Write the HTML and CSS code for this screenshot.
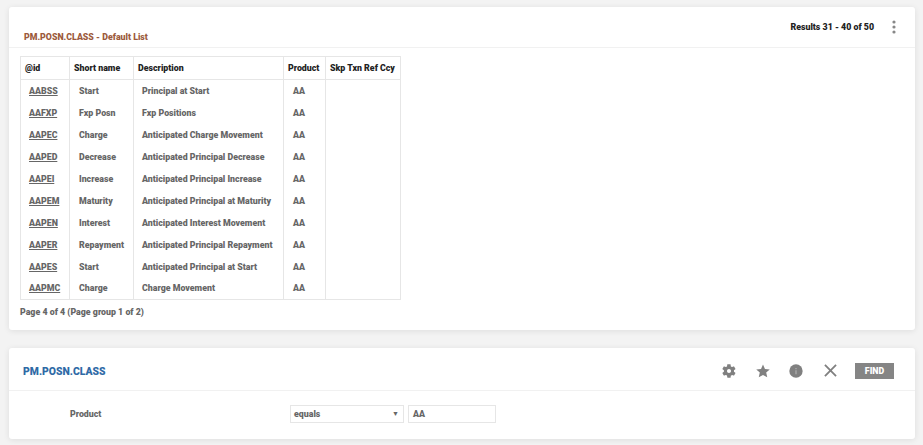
FILE: index.html
```html
<!DOCTYPE html>
<html lang="en">
<head>
<meta charset="utf-8">
<title>PM.POSN.CLASS</title>
<link rel="stylesheet" href="styles.css">
</head>
<body>
<section class="card list-card">
  <header class="list-head">
    <h2 class="list-title">PM.POSN.CLASS - Default List</h2>
    <div class="results">
      <span>Results 31 - 40 of 50</span>
      <svg class="kebab" width="4" height="14" viewBox="0 0 4 14"><circle cx="2" cy="2" r="1.6"/><circle cx="2" cy="7" r="1.6"/><circle cx="2" cy="12" r="1.6"/></svg>
    </div>
  </header>
  <div class="list-body">
    <table class="grid">
      <thead>
        <tr><th class="c1">@id</th><th class="c2">Short name</th><th class="c3">Description</th><th class="c4">Product</th><th class="c5">Skp Txn Ref Ccy</th></tr>
      </thead>
      <tbody>
        <tr><td><a href="#">AABSS</a></td><td>Start</td><td>Principal at Start</td><td>AA</td><td></td></tr>
        <tr><td><a href="#">AAFXP</a></td><td>Fxp Posn</td><td>Fxp Positions</td><td>AA</td><td></td></tr>
        <tr><td><a href="#">AAPEC</a></td><td>Charge</td><td>Anticipated Charge Movement</td><td>AA</td><td></td></tr>
        <tr><td><a href="#">AAPED</a></td><td>Decrease</td><td>Anticipated Principal Decrease</td><td>AA</td><td></td></tr>
        <tr><td><a href="#">AAPEI</a></td><td>Increase</td><td>Anticipated Principal Increase</td><td>AA</td><td></td></tr>
        <tr><td><a href="#">AAPEM</a></td><td>Maturity</td><td>Anticipated Principal at Maturity</td><td>AA</td><td></td></tr>
        <tr><td><a href="#">AAPEN</a></td><td>Interest</td><td>Anticipated Interest Movement</td><td>AA</td><td></td></tr>
        <tr><td><a href="#">AAPER</a></td><td>Repayment</td><td>Anticipated Principal Repayment</td><td>AA</td><td></td></tr>
        <tr><td><a href="#">AAPES</a></td><td>Start</td><td>Anticipated Principal at Start</td><td>AA</td><td></td></tr>
        <tr><td><a href="#">AAPMC</a></td><td>Charge</td><td>Charge Movement</td><td>AA</td><td></td></tr>
      </tbody>
    </table>
    <p class="pager">Page 4 of 4 (Page group 1 of 2)</p>
  </div>
</section>
<section class="card find-card">
  <header class="find-head">
    <h1 class="find-title">PM.POSN.CLASS</h1>
    <div class="tools">
      <svg class="tool" width="16" height="16" viewBox="0 0 24 24"><path d="M19.4 13c.1-.3.1-.7.1-1s0-.7-.1-1l2.1-1.6c.2-.2.2-.4.1-.6l-2-3.5c-.1-.2-.4-.3-.6-.2l-2.5 1c-.5-.4-1.1-.7-1.7-1l-.4-2.6c0-.3-.2-.5-.5-.5h-4c-.3 0-.5.2-.5.4l-.4 2.7c-.6.2-1.2.6-1.7 1l-2.5-1c-.2-.1-.5 0-.6.2l-2 3.5c-.1.2-.1.5.1.6L4.4 11c0 .3-.1.7-.1 1s0 .7.1 1l-2.1 1.6c-.2.2-.2.4-.1.6l2 3.5c.1.2.4.3.6.2l2.5-1c.5.4 1.1.7 1.7 1l.4 2.6c0 .3.2.5.5.5h4c.3 0 .5-.2.5-.4l.4-2.7c.6-.2 1.2-.6 1.7-1l2.5 1c.2.1.5 0 .6-.2l2-3.5c.1-.2.1-.5-.1-.6L19.4 13zM12 15c-1.7 0-3-1.3-3-3s1.3-3 3-3 3 1.3 3 3-1.3 3-3 3z"/></svg>
      <svg class="tool" width="16" height="16" viewBox="-1 -1 26 26"><path d="M12 1.5l3.2 7.1 7.8.8-5.8 5.2 1.7 7.7L12 18.4l-6.9 3.9 1.7-7.7L1 9.4l7.8-.8z"/></svg>
      <svg class="tool tool-info" width="16" height="16" viewBox="0 0 24 24"><circle cx="12" cy="12" r="10"/><path class="info-mark" d="M11.2 7.5h1.6v1.8h-1.6zm0 3.5h1.6v6h-1.6z"/></svg>
      <svg class="tool-x" width="15" height="15" viewBox="0 0 14 14"><path d="M1.8 1.8l10.4 10.4M12.2 1.8L1.8 12.2"/></svg>
      <button class="find-btn" type="button">FIND</button>
    </div>
  </header>
  <form class="find-row">
    <label class="find-label">Product</label>
    <div class="select-box"><span>equals</span><span class="caret">▼</span></div>
    <div class="value-box">AA</div>
  </form>
</section>
</body>
</html>
```
FILE: styles.css
```css
* { box-sizing: border-box; }
html, body { height: 100%; }
body {
  margin: 0;
  padding: 7px 8px 0 9px;
  background: #f3f3f3;
  font-family: Roboto, "Liberation Sans", sans-serif;
  font-size: 8.8px;
  font-weight: 900;
  color: #666;
  overflow: hidden;
}
.card {
  background: #fff;
  border-radius: 3px;
  box-shadow: 0 1px 6px rgba(0,0,0,.09);
}
.list-card { height: 323px; }
.list-head {
  height: 41px;
  border-bottom: 1px solid #f1f1f1;
  display: flex;
  justify-content: space-between;
  padding: 0 19px 0 15px;
}
.list-title {
  margin: 24px 0 0;
  font-size: 8.8px;
  line-height: 13px;
  font-weight: 900;
  color: #9c5a3c;
}
.results {
  display: flex;
  align-items: center;
  gap: 18px;
  height: 14px;
  margin-top: 13px;
  color: #222;
}
.kebab { fill: #888; }
.list-body { padding: 8px 0 0 11px; }
.grid {
  border-collapse: collapse;
  border: 1px solid #e6e6e6;
  table-layout: fixed;
  width: 381px;
}
.grid th {
  height: 23px;
  padding: 0 0 0 4px;
  text-align: left;
  color: #222;
  font-weight: 900;
  border: 1px solid #e6e6e6;
  white-space: nowrap;
}
.grid td {
  height: 22px;
  padding: 0 0 0 8px;
  border-left: 1px solid #e6e6e6;
  border-right: 1px solid #e6e6e6;
  white-space: nowrap;
}
.grid td:nth-child(2), .grid td:nth-child(4) { padding-left: 9px; }
.grid a { color: #666; }
.c1 { width: 49px; }
.c2 { width: 64px; }
.c3 { width: 150px; }
.c4 { width: 42px; }
.pager { margin: 6px 0 0; line-height: 13px; }
.find-card { height: 91px; margin-top: 18px; }
.find-head {
  height: 43px;
  border-bottom: 1px solid #f1f1f1;
  display: flex;
  align-items: center;
  justify-content: space-between;
  padding: 3px 21px 0 14px;
}
.find-title {
  margin: 2px 0 0;
  font-size: 10.4px;
  font-weight: 900;
  color: #2f6aa6;
}
.tools { display: flex; align-items: center; }
.tool { fill: #808080; margin-right: 17.5px; display: block; }
.tool-info { margin-right: 19px; }
.info-mark { fill: #b5b5b5; }
.tool-x { fill: none; stroke: #808080; stroke-width: 1.7; margin-right: 17px; display: block; }
.find-btn {
  width: 39px;
  height: 16px;
  padding: 0;
  border: 0;
  background: #858585;
  color: #fff;
  font: 900 8.8px Roboto, "Liberation Sans", sans-serif;
}
.find-row {
  display: flex;
  align-items: center;
  padding: 14px 0 0 61px;
}
.find-label { width: 220px; }
.select-box, .value-box {
  height: 18px;
  border: 1px solid #e6e6e6;
  display: flex;
  align-items: center;
}
.select-box {
  width: 114px;
  margin-right: 4px;
  justify-content: space-between;
  padding: 0 4px 0 3px;
}
.caret { font-size: 7px; color: #666; }
.value-box { width: 88px; padding-left: 4px; }
```
